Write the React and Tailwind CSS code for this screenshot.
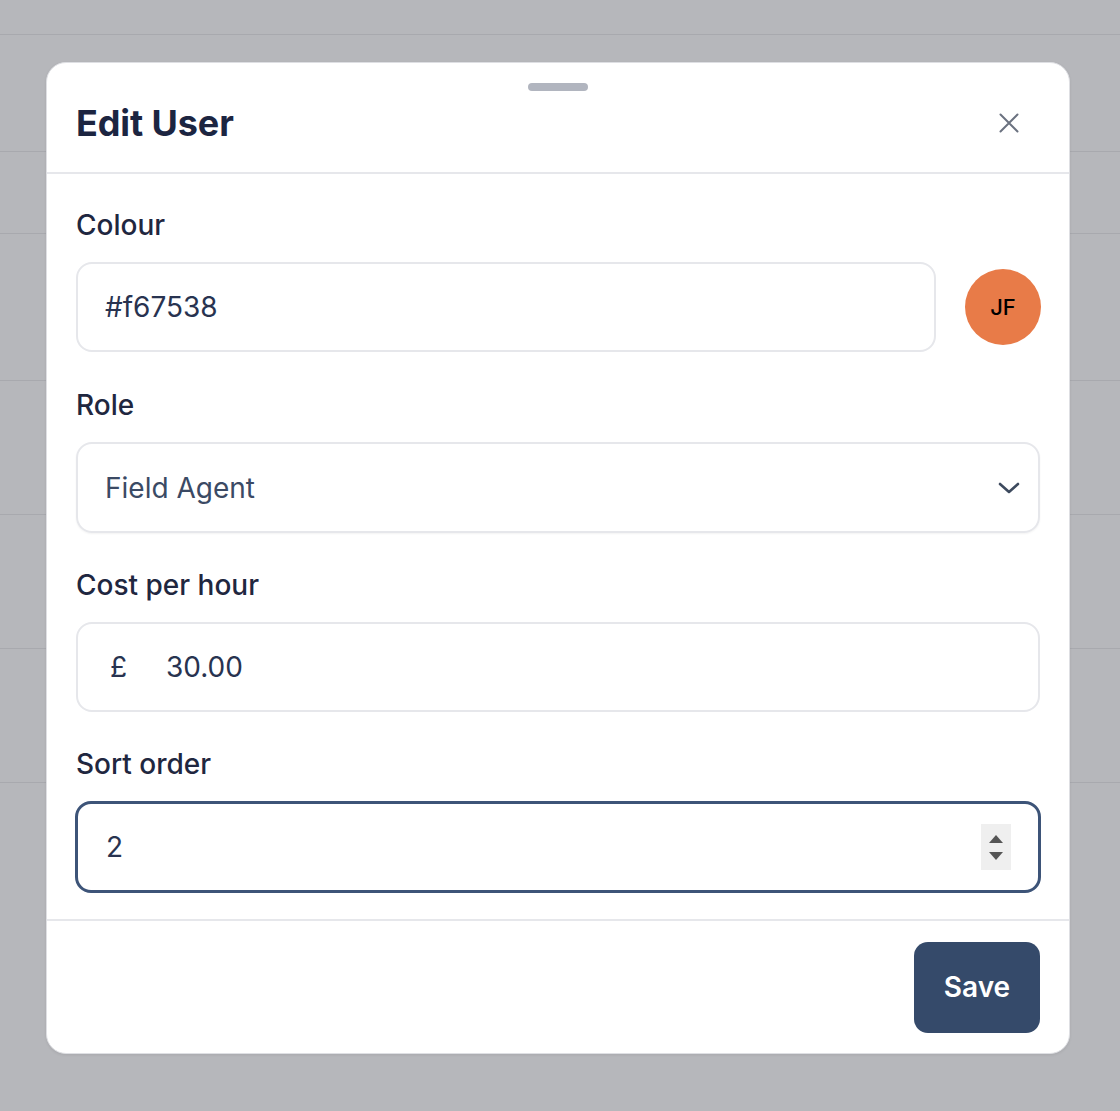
import React from "react";

function XIcon() {
  return (
    <svg width="24" height="24" viewBox="0 0 24 24" fill="none" stroke="#6b7280" strokeWidth="2" strokeLinecap="round">
      <path d="M3.5 3.5L20.5 20.5M20.5 3.5L3.5 20.5" />
    </svg>
  );
}

function Chevron() {
  return (
    <svg width="22" height="14" viewBox="0 0 22 14" fill="none" stroke="#3d4a5e" strokeWidth="2.6" strokeLinecap="round" strokeLinejoin="round">
      <path d="M2 3l9 8 9-8" />
    </svg>
  );
}

function Label({ children }) {
  return (
    <div className="text-[28px] leading-[40px] font-medium text-[#1f2740] mb-[17px]">{children}</div>
  );
}

export default function App() {
  const rows = [35, 117, 82, 147, 134, 134, 134];
  return (
    <div
      className="relative w-[1120px] h-[1111px] bg-[#b6b7bb] overflow-hidden"
      style={{ fontFamily: "Inter, 'Noto Sans', sans-serif" }}
    >
      <div className="flex flex-col">
        {rows.map((h, i) => (
          <div key={i} className="border-b border-[#a8a9ae]" style={{ height: h }} />
        ))}
      </div>

      <div className="absolute left-[46px] top-[62px] w-[1024px] h-[992px] bg-white rounded-[20px] border border-[#dedfe3] shadow-[0_1px_3px_rgba(0,0,0,0.08)] flex flex-col">
        <div className="relative h-[111px] shrink-0 border-b-2 border-[#e6e7eb] flex items-center justify-between pl-[29px] pr-[40px] pt-[10px]">
          <div className="absolute left-1/2 -translate-x-1/2 top-[20px] w-[60px] h-[8px] rounded-full bg-[#b1b5bf]" />
          <h2 className="text-[36px] leading-[44px] font-bold text-[#1c2541] tracking-[-0.1px]">Edit User</h2>
          <div className="w-[40px] h-[40px] flex items-center justify-center">
            <XIcon />
          </div>
        </div>

        <div className="flex-1 px-[29px] pt-[31px] flex flex-col">
          <Label>Colour</Label>
          <div className="flex items-center gap-[29px]">
            <div className="flex-1 h-[90px] rounded-[16px] border-2 border-[#e6e7eb] flex items-center px-[27px] text-[28px] text-[#283350]">
              #f67538
            </div>
            <div className="w-[76px] h-[76px] mr-[-1px] rounded-full bg-[#e87b48] flex items-center justify-center text-[22px] font-medium text-black">
              JF
            </div>
          </div>

          <div className="mt-[33px]">
            <Label>Role</Label>
            <div className="h-[91px] rounded-[16px] border-2 border-[#e6e7eb] shadow-[0_1px_2px_rgba(0,0,0,0.05)] flex items-center justify-between pl-[27px] pr-[18px] text-[28px] text-[#3b4a64]">
              <span>Field Agent</span>
              <Chevron />
            </div>
          </div>

          <div className="mt-[32px]">
            <Label>Cost per hour</Label>
            <div className="h-[90px] rounded-[16px] border-2 border-[#e6e7eb] flex items-center pl-[32px] text-[28px] text-[#283350]">
              <span className="w-[56px]">£</span>
              <span>30.00</span>
            </div>
          </div>

          <div className="mt-[32px]">
            <Label>Sort order</Label>
            <div className="h-[92px] -mx-[1px] rounded-[16px] border-[3px] border-[#3d5478] flex items-center justify-between pl-[28px] pr-[27px] text-[28px] text-[#283350]">
              <span>2</span>
              <div className="w-[30px] h-[46px] bg-[#efefef] flex flex-col items-center justify-center gap-[9px]">
                <div className="w-0 h-0 border-l-[7px] border-r-[7px] border-b-[8px] border-l-transparent border-r-transparent border-b-[#555]" />
                <div className="w-0 h-0 border-l-[7px] border-r-[7px] border-t-[8px] border-l-transparent border-r-transparent border-t-[#555]" />
              </div>
            </div>
          </div>
        </div>

        <div className="h-[134px] shrink-0 border-t-2 border-[#e6e7eb] flex items-center justify-end px-[29px]">
          <button className="w-[126px] h-[91px] rounded-[14px] bg-[#354a6a] text-white text-[28px] font-semibold">
            Save
          </button>
        </div>
      </div>
    </div>
  );
}
